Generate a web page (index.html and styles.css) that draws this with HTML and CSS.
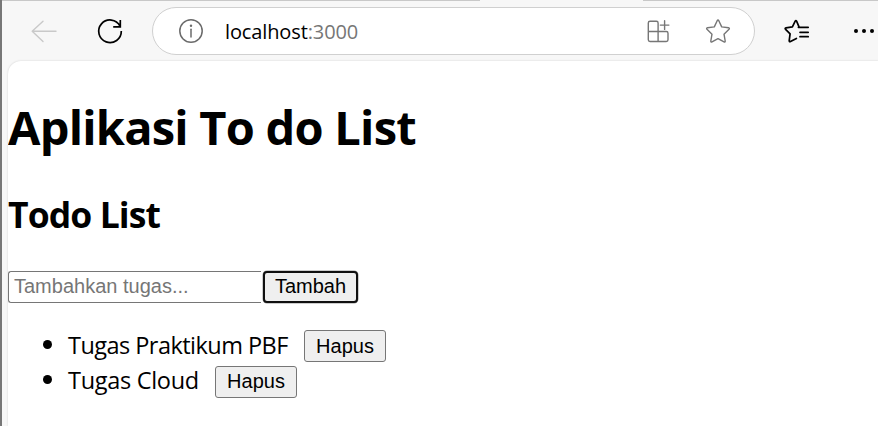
FILE: index.html
```
<!DOCTYPE html>
<html lang="id">
<head>
<meta charset="utf-8">
<title>Aplikasi To do List</title>
<link rel="stylesheet" href="styles.css">
</head>
<body>
<div class="browser">
  <header class="toolbar">
    <svg class="back" width="26" height="24" viewBox="0 0 26 24"><path d="M25 12.3H1.5M12 2.2L1.2 12.3L12 22.4"/></svg>
    <svg class="reload" width="28" height="28" viewBox="0 0 28 28"><path d="M24 9A11.3 11.3 0 1 0 25.3 14M24.3 3V9.8H17.2"/></svg>
    <div class="address">
      <svg class="info" width="26" height="26" viewBox="0 0 26 26"><circle cx="13" cy="13" r="11.2"/><path d="M13 11.3V19"/><circle class="dot" cx="13" cy="7.8" r="1.2"/></svg>
      <span class="url">localhost<span class="port">:3000</span></span>
      <svg class="apps" width="24" height="24" viewBox="0 0 24 24"><path d="M12.1 12.5V4Q12.1 2.3 10.4 2.3H4Q2.3 2.3 2.3 4V20.8Q2.3 22.5 4 22.5H20.3Q22 22.5 22 20.8V14.2Q22 12.5 20.3 12.5H2.3M12.1 12.5V22.5M18.6 1.8V10.4M14.3 6.1H22.9"/></svg>
      <svg class="star" width="26" height="26" viewBox="0 0 26 26"><path d="M12.2 2.7Q13 1.3 13.8 2.7L16.7 8.9L23.5 9.8Q25 10.2 24 11.3L19 16.2L20.2 23Q20.3 24.4 19 23.8L13 20.6L7 23.8Q5.7 24.4 5.8 23L7 16.2L2 11.3Q1 10.2 2.5 9.8L9.3 8.9Z"/></svg>
    </div>
    <svg class="favorites" width="28" height="28" viewBox="0 0 28 28"><path d="M15.9 9.7L13.6 4.2Q12.9 2.9 12.2 4.2L9.4 9.9L3 10.8Q1.5 11.2 2.6 12.3L7.1 16.9L6.2 23.7Q6.3 25.3 7.5 24.5L13.4 21.4M15.4 10.3H25.2M17 15.3H25.2M17 19.7H25.2"/></svg>
    <svg class="more" width="22" height="6" viewBox="0 0 22 6"><circle cx="3" cy="3" r="2"/><circle cx="11" cy="3" r="2"/><circle cx="19" cy="3" r="2"/></svg>
  </header>
  <main class="page">
    <h1>Aplikasi To do List</h1>
    <h2>Todo List</h2>
    <form class="entry">
      <input type="text" placeholder="Tambahkan tugas...">
      <button type="button" class="add">Tambah</button>
    </form>
    <ul class="tasks">
      <li><span class="task-one">Tugas Praktikum PBF</span><button type="button">Hapus</button></li>
      <li><span class="task-two">Tugas Cloud</span><button type="button">Hapus</button></li>
    </ul>
  </main>
</div>
</body>
</html>
```
FILE: styles.css
```
* { box-sizing: border-box; }
body { margin: 0; overflow: hidden; background: #f7f7f7; color: #000; font-family: "Open Sans", "Noto Sans", sans-serif; }
.browser {
  height: 426px;
  padding-left: 6px;
  border-left: 2px solid #777;
  background: linear-gradient(#c8c8c8, #c8c8c8) 0 0 / 478px 1px no-repeat,
    linear-gradient(#c8c8c8, #c8c8c8) 641px 0 / 235px 1px no-repeat, #f7f7f7;
}
svg { display: block; flex: none; fill: none; stroke-linecap: round; stroke-linejoin: round; }
.toolbar { display: flex; align-items: center; height: 61px; padding-left: 23px; }
.back { stroke: #c9c9c9; stroke-width: 1.4; }
.reload { margin-left: 39px; stroke: #000; stroke-width: 1.7; stroke-linecap: butt; stroke-linejoin: miter; }
.address { display: flex; align-items: center; flex: none; width: 603px; height: 48px; margin: 1px 0 0 28px; padding-left: 25px; border: 1.5px solid #d0d0d0; border-radius: 24px; background: #fff; }
.info { stroke: #6b6b6b; stroke-width: 1.5; }
.info .dot { fill: #6b6b6b; stroke: none; }
.url { width: 400px; margin-left: 21px; padding-top: 2px; font-size: 20px; line-height: 28px; letter-spacing: -0.12px; white-space: nowrap; }
.port { color: #767676; }
.apps { margin-left: 21px; stroke: #767676; stroke-width: 1.4; }
.star { margin-left: 35px; stroke: #767676; stroke-width: 1.4; }
.favorites { margin-left: 28px; stroke: #000; stroke-width: 1.7; }
.more { margin-left: 42px; fill: #000; }
.page { height: 365px; border-radius: 13px 0 0 0; background: #fff; box-shadow: 0 0 2px #ccc; overflow: hidden; }
h1 { margin: 34px 0 0; font-size: 47px; line-height: 64px; font-weight: 700; letter-spacing: -0.77px; white-space: nowrap; }
h2 { margin: 31px 0 0; font-size: 35.5px; line-height: 48px; font-weight: 700; letter-spacing: -0.9px; white-space: nowrap; }
input, button { height: 32px; font-family: "Liberation Sans", sans-serif; font-size: 20px; color: #000; border: 1px solid #767676; border-radius: 3px; }
.entry { display: flex; margin: 33px 0 0; }
input { width: 253px; padding: 0 5px 2px; border-right: 0; border-radius: 3px 0 0 3px; background: #fff; }
input::placeholder { color: #767676; opacity: 1; }
button { padding: 0; width: 82px; background: #efefef; line-height: 28px; }
.add { width: 95px; margin-left: 2px; padding-bottom: 2px; border: 2px solid #101010; border-radius: 4px; line-height: 26px; box-shadow: 0 0 0 0.5px #999; }
.tasks { margin: 27px 0 0; padding-left: 60px; list-style: none; font-size: 23.5px; }
.tasks li { display: flex; height: 36px; line-height: 30px; white-space: nowrap; }
.tasks li::before { content: ""; width: 9px; height: 9px; margin: 10px 16px 0 -25px; border-radius: 50%; background: #000; }
.tasks li + li::before { margin-top: 9px; }
.tasks li + li button { padding-bottom: 2px; }
.task-one { width: 236px; letter-spacing: -0.54px; }
.task-two { width: 147px; letter-spacing: -0.3px; line-height: 28px; }
```
